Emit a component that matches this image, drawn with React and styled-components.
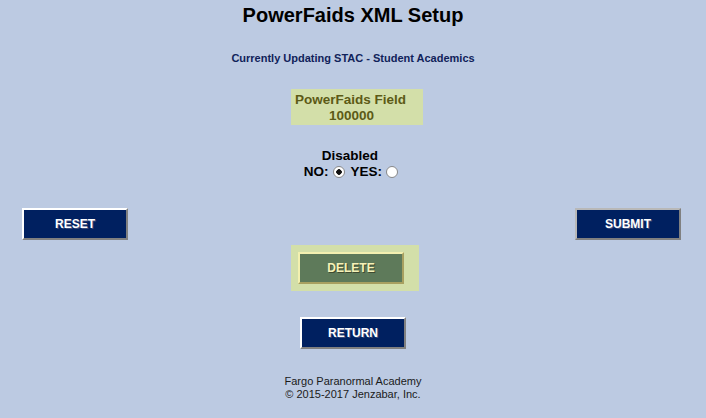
import { useState } from "react";
import styled, { createGlobalStyle } from "styled-components";

const GlobalStyle = createGlobalStyle`
    html, body {
        margin: 0;
        padding: 0;
        background: #BCCAE2;
    }

    body {
        font-family: "Liberation Sans", Arial, sans-serif;
    }
`;

export default function App() {
    const [disabled, setDisabled] = useState("no");

    return (
        <>
            <GlobalStyle />
            <Page>
                <Title>PowerFaids XML Setup</Title>
                <Subtitle>Currently Updating STAC - Student Academics</Subtitle>

                <FieldBox>
                    <span>PowerFaids Field</span>
                    <span className="code">100000</span>
                </FieldBox>

                <Toggle>
                    <p>Disabled</p>
                    <RadioRow>
                        <label>
                            NO:
                            <Radio checked={disabled === "no"} onClick={() => setDisabled("no")} />
                        </label>
                        <label>
                            YES:
                            <Radio checked={disabled === "yes"} onClick={() => setDisabled("yes")} />
                        </label>
                    </RadioRow>
                </Toggle>

                <ActionRow>
                    <Button>RESET</Button>
                    <Button $focused>SUBMIT</Button>
                </ActionRow>

                <DeleteBox>
                    <DeleteButton>DELETE</DeleteButton>
                </DeleteBox>

                <Button>RETURN</Button>

                <Footer>
                    <p>Fargo Paranormal Academy</p>
                    <p>© 2015-2017 Jenzabar, Inc.</p>
                </Footer>
            </Page>
        </>
    );
}

const Page = styled.div`
    width: 706px;
    height: 418px;
    display: flex;
    flex-direction: column;
    align-items: center;
    box-sizing: border-box;
    padding-top: 3px;
`;

const Title = styled.h1`
    margin: 0;
    font-size: 20px;
    font-weight: bold;
    color: #000000;
    line-height: 24px;
`;

const Subtitle = styled.h2`
    margin: 24px 0 0;
    font-size: 11px;
    font-weight: bold;
    color: #10225A;
    line-height: 14px;
`;

const FieldBox = styled.div`
    margin: 24px 0 0 8px;
    width: 132px;
    height: 36px;
    box-sizing: border-box;
    padding: 3px 0 0 4px;
    background: #D3DFA9;
    color: #5C5A16;
    font-size: 13.5px;
    font-weight: bold;
    line-height: 16px;
    display: flex;
    flex-direction: column;
    align-items: flex-start;

    .code {
        align-self: stretch;
        padding-left: 34px;
    }
`;

const Toggle = styled.div`
    margin-top: 23px;
    display: flex;
    flex-direction: column;
    align-items: center;
    font-size: 13.5px;
    font-weight: bold;
    color: #000000;
    line-height: 16px;

    p {
        margin: 0 6px 0 0;
    }
`;

const RadioRow = styled.div`
    display: flex;
    gap: 6px;
    margin-right: 4px;

    label {
        display: flex;
        align-items: center;
        gap: 4px;
    }
`;

const Radio = styled.span`
    width: 12px;
    height: 12px;
    box-sizing: border-box;
    border-radius: 50%;
    border: 1px solid #8A8A8A;
    background: radial-gradient(circle, ${({ checked }) => (checked ? "#111 0 2.5px, #FFF 3px" : "#FFF 0")});
    cursor: pointer;
`;

const ActionRow = styled.div`
    align-self: stretch;
    display: flex;
    justify-content: space-between;
    padding: 0 25px 0 22px;
    margin-top: 28px;
`;

const Button = styled.button`
    width: 106px;
    height: 32px;
    box-sizing: border-box;
    background: #002060;
    color: #FFFFFF;
    font-family: "Liberation Sans", Arial, sans-serif;
    font-size: 12px;
    font-weight: bold;
    text-shadow: 1px 1px 0 #3A4A7A;
    border: 2px solid;
    border-color: ${({ $focused }) => ($focused ? "#B8B8B8 #808080 #808080 #B8B8B8" : "#FFFFFF #808080 #808080 #FFFFFF")};
    cursor: pointer;
`;

const DeleteBox = styled.div`
    margin: 5px 0 26px 4px;
    width: 128px;
    height: 46px;
    box-sizing: border-box;
    padding: 7px 0 0 7px;
    background: #D3DFA9;
`;

const DeleteButton = styled.button`
    width: 106px;
    height: 32px;
    box-sizing: border-box;
    background: #5E7A5A;
    color: #F6F2B8;
    font-family: "Liberation Sans", Arial, sans-serif;
    font-size: 12px;
    font-weight: bold;
    text-shadow: 1px 1px 0 #3E4A30;
    border: 2px solid;
    border-color: #F3F0B0 #A8A060 #A8A060 #F3F0B0;
    cursor: pointer;
`;

const Footer = styled.div`
    margin-top: 26px;
    text-align: center;
    font-size: 11px;
    color: #1A1A1A;
    line-height: 13px;

    p {
        margin: 0;
    }
`;
